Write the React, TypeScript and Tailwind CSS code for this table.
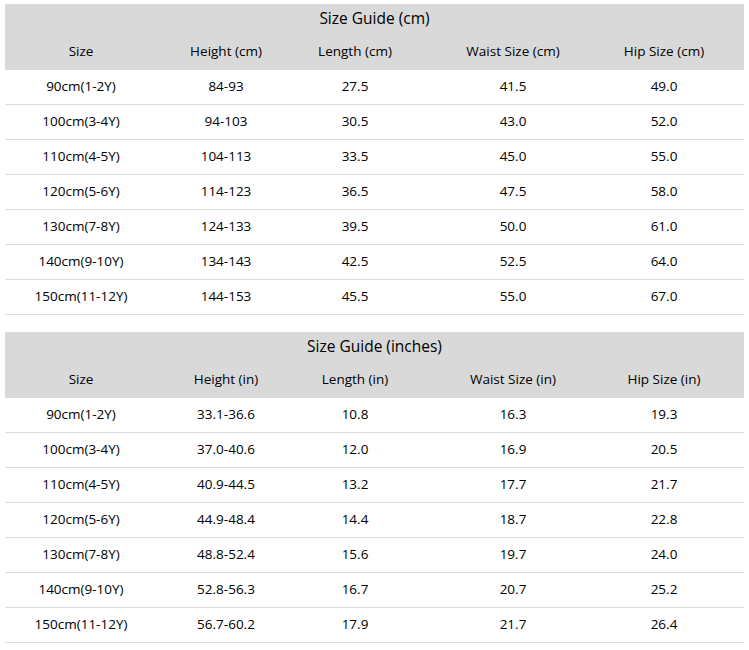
import * as React from "react";

type Row = [string, string, string, string, string];

const CM_ROWS: Row[] = [
  ["90cm(1-2Y)", "84-93", "27.5", "41.5", "49.0"],
  ["100cm(3-4Y)", "94-103", "30.5", "43.0", "52.0"],
  ["110cm(4-5Y)", "104-113", "33.5", "45.0", "55.0"],
  ["120cm(5-6Y)", "114-123", "36.5", "47.5", "58.0"],
  ["130cm(7-8Y)", "124-133", "39.5", "50.0", "61.0"],
  ["140cm(9-10Y)", "134-143", "42.5", "52.5", "64.0"],
  ["150cm(11-12Y)", "144-153", "45.5", "55.0", "67.0"],
];

const IN_ROWS: Row[] = [
  ["90cm(1-2Y)", "33.1-36.6", "10.8", "16.3", "19.3"],
  ["100cm(3-4Y)", "37.0-40.6", "12.0", "16.9", "20.5"],
  ["110cm(4-5Y)", "40.9-44.5", "13.2", "17.7", "21.7"],
  ["120cm(5-6Y)", "44.9-48.4", "14.4", "18.7", "22.8"],
  ["130cm(7-8Y)", "48.8-52.4", "15.6", "19.7", "24.0"],
  ["140cm(9-10Y)", "52.8-56.3", "16.7", "20.7", "25.2"],
  ["150cm(11-12Y)", "56.7-60.2", "17.9", "21.7", "26.4"],
];

const COLS = "grid grid-cols-[152px_138px_120px_196px_133px]";

function Cells({ cells }: { cells: string[] }) {
  return (
    <>
      {cells.map((c, i) => (
        <div
          key={i}
          className={
            "flex items-center justify-center whitespace-nowrap " +
            (i === 4 ? "pr-[27px]" : "")
          }
        >
          {c}
        </div>
      ))}
    </>
  );
}

function SizeTable({
  title,
  unit,
  rows,
}: {
  title: string;
  unit: string;
  rows: Row[];
}) {
  return (
    <div className="w-[739px]">
      <div className="bg-[#d9d9d9]">
        <div className="flex h-[29px] items-center justify-center text-[15.5px]">
          {title}
        </div>
        <div className={`${COLS} h-[37px] text-[13.5px]`}>
          <Cells
            cells={[
              "Size",
              `Height (${unit})`,
              `Length (${unit})`,
              `Waist Size (${unit})`,
              `Hip Size (${unit})`,
            ]}
          />
        </div>
      </div>
      {rows.map((r) => (
        <div
          key={r[0]}
          className={`${COLS} h-[35px] border-b border-[#dcdcdc] pb-[2px] text-[13.5px]`}
        >
          <Cells cells={r} />
        </div>
      ))}
    </div>
  );
}

export default function App() {
  return (
    <div
      className="min-h-[650px] w-[749px] bg-white pl-[5px] pt-[4px] text-black"
      style={{ fontFamily: '"Open Sans", "Noto Sans", sans-serif' }}
    >
      <div className="flex flex-col gap-[17px]">
        <SizeTable title="Size Guide (cm)" unit="cm" rows={CM_ROWS} />
        <SizeTable title="Size Guide (inches)" unit="in" rows={IN_ROWS} />
      </div>
    </div>
  );
}
